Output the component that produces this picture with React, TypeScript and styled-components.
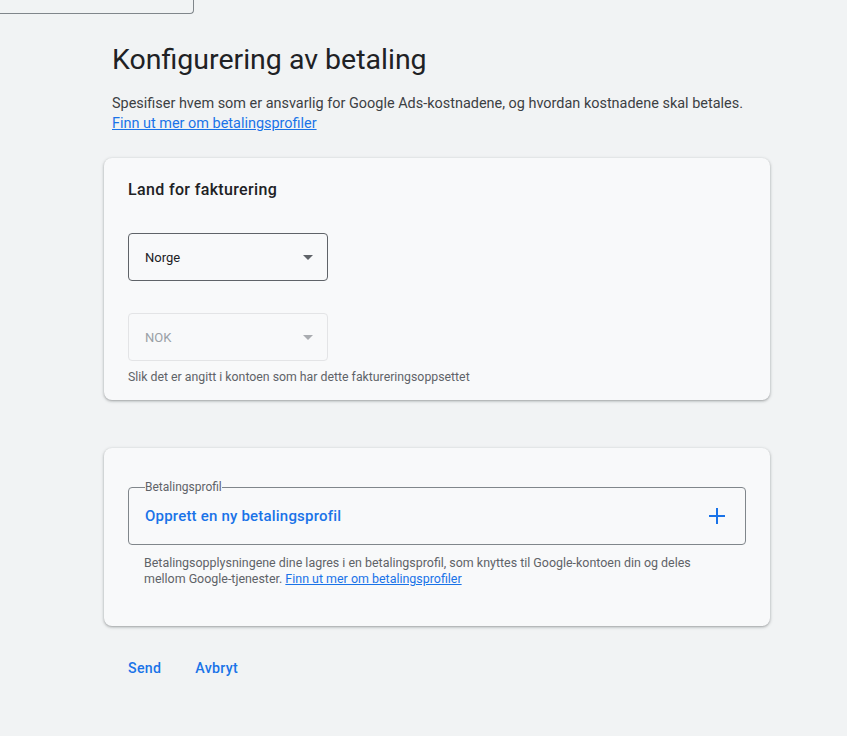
import { createGlobalStyle, styled } from 'styled-components';

const GlobalStyle = createGlobalStyle`
  html, body {
    margin: 0;
    padding: 0;
    background: #f1f3f4;
    font-family: Roboto, 'Liberation Sans', Arial, sans-serif;
    color: #202124;
  }
`;

function App() {
  return (
    <>
      <GlobalStyle />
      <TopStub />
      <Page>
        <Title>Konfigurering av betaling</Title>
        <Intro>
          Spesifiser hvem som er ansvarlig for Google Ads-kostnadene, og hvordan kostnadene skal betales.
          <br />
          <TextLink href="#">Finn ut mer om betalingsprofiler</TextLink>
        </Intro>

        <Card $padding="20px 24px 15px">
          <CardTitle>Land for fakturering</CardTitle>
          <Select $top="31px">
            <SelectValue>Norge</SelectValue>
            <Caret />
          </Select>
          <Select $top="32px" $disabled>
            <SelectValue $disabled>NOK</SelectValue>
            <Caret $disabled />
          </Select>
          <Hint>Slik det er angitt i kontoen som har dette faktureringsoppsettet</Hint>
        </Card>

        <Card $padding="32px 24px 39px" $gap="48px">
          <Fieldset>
            <Legend>Betalingsprofil</Legend>
            <FieldRow>
              <CreateText>Opprett en ny betalingsprofil</CreateText>
              <svg width="16" height="16" viewBox="0 0 16 16" aria-hidden>
                <path d="M8 0v16M0 8h16" stroke="#1a73e8" strokeWidth="2" />
              </svg>
            </FieldRow>
          </Fieldset>
          <FieldHint>
            Betalingsopplysningene dine lagres i en betalingsprofil, som knyttes til Google-kontoen din og deles
            mellom Google-tjenester. <TextLink href="#">Finn ut mer om betalingsprofiler</TextLink>
          </FieldHint>
        </Card>

        <Actions>
          <TextButton>Send</TextButton>
          <TextButton>Avbryt</TextButton>
        </Actions>
      </Page>
    </>
  );
}

const TopStub = styled.div`
  width: 193px;
  height: 13px;
  border: 1px solid #80868b;
  border-top: none;
  border-left: none;
  border-bottom-right-radius: 4px;
`;

const Page = styled.main`
  width: 666px;
  margin-left: 104px;
  padding-bottom: 40px;
`;

const Title = styled.h1`
  margin: 28px 0 0 8px;
  font-size: 28.5px;
  font-weight: 400;
  line-height: 36px;
  color: #202124;
`;

const Intro = styled.p`
  margin: 16px 0 0 8px;
  font-size: 14.45px;
  line-height: 20px;
  color: #3c4043;
`;

const TextLink = styled.a`
  color: #1a73e8;
  text-decoration: underline;
`;

const Card = styled.section<{ $padding: string; $gap?: string }>`
  margin-top: ${(p) => p.$gap ?? '24px'};
  background: #f8f9fa;
  border-radius: 8px;
  padding: ${(p) => p.$padding};
  box-shadow: 0 1px 2px rgba(60, 64, 67, 0.3), 0 1px 3px 1px rgba(60, 64, 67, 0.15);
`;

const CardTitle = styled.h2`
  margin: 0;
  font-size: 16px;
  font-weight: 500;
  letter-spacing: 0.35px;
  line-height: 24px;
  color: #202124;
`;

const Select = styled.div<{ $top: string; $disabled?: boolean }>`
  margin-top: ${(p) => p.$top};
  box-sizing: border-box;
  width: 200px;
  height: 48px;
  display: flex;
  align-items: center;
  justify-content: space-between;
  padding: 0 14px 0 16px;
  border: 1px solid ${(p) => (p.$disabled ? '#e3e4e6' : '#5f6368')};
  border-radius: 4px;
`;

const SelectValue = styled.span<{ $disabled?: boolean }>`
  font-size: 13px;
  color: ${(p) => (p.$disabled ? '#9aa0a6' : '#202124')};
`;

const Caret = styled.span<{ $disabled?: boolean }>`
  width: 0;
  height: 0;
  border-left: 5px solid transparent;
  border-right: 5px solid transparent;
  border-top: 5px solid ${(p) => (p.$disabled ? '#a9acb0' : '#5f6368')};
`;

const Hint = styled.p`
  margin: 8px 0 0;
  font-size: 12.3px;
  line-height: 16px;
  color: #5f6368;
`;

const Fieldset = styled.fieldset`
  margin: 0;
  padding: 0 20px 6px 16px;
  border: 1px solid #80868b;
  border-radius: 4px;
`;

const Legend = styled.legend`
  padding: 0;
  font-size: 12px;
  line-height: 14px;
  color: #5f6368;
`;

const FieldRow = styled.div`
  display: flex;
  align-items: center;
  justify-content: space-between;
  height: 44px;
`;

const CreateText = styled.span`
  font-size: 15px;
  font-weight: 500;
  letter-spacing: 0.2px;
  color: #1a73e8;
`;

const FieldHint = styled.p`
  margin: 10px 16px 0;
  font-size: 12.45px;
  line-height: 16px;
  color: #5f6368;
`;

const Actions = styled.div`
  display: flex;
  gap: 10px;
  margin-top: 24px;
  padding-left: 12px;
`;

const TextButton = styled.button`
  border: none;
  background: none;
  padding: 8px 12px;
  font-family: Roboto, 'Liberation Sans', Arial, sans-serif;
  font-size: 14.2px;
  font-weight: 500;
  letter-spacing: 0.3px;
  line-height: 20px;
  color: #1a73e8;
  cursor: pointer;
`;

export default App;
